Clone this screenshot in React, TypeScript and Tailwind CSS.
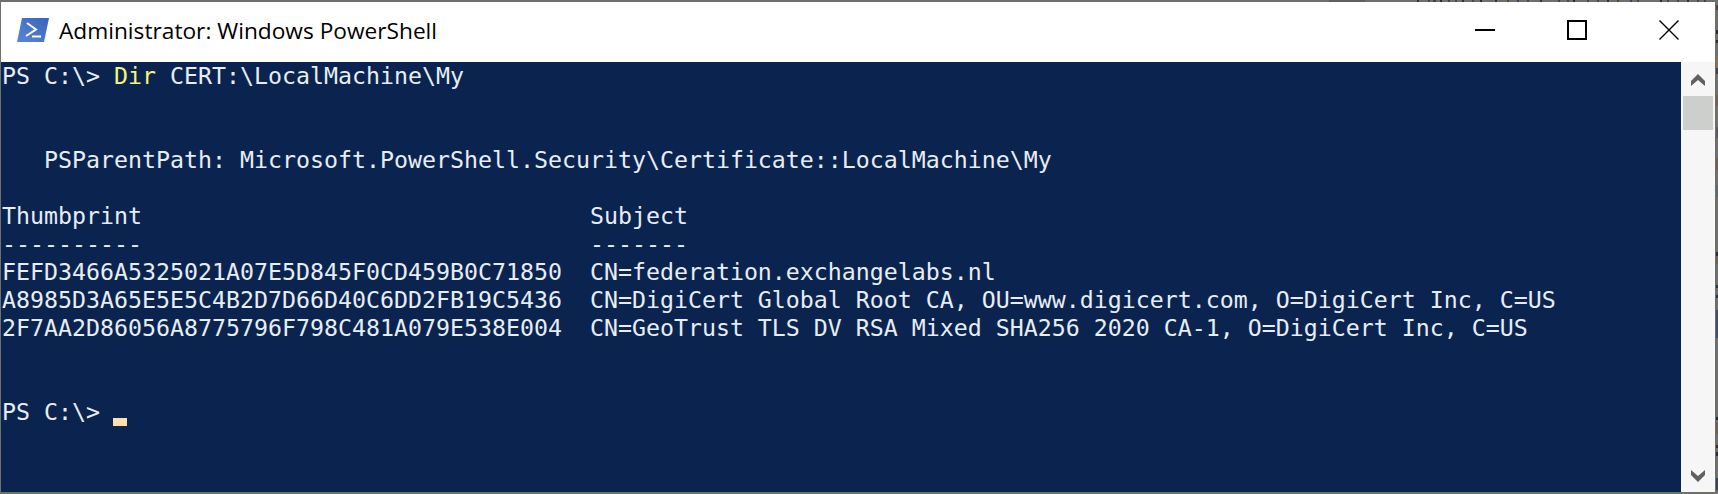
import React from 'react';

const consoleFont = '"DejaVu Sans Mono", monospace';

// bits of the desktop behind the window that show along its top and right edges
const topMarks = [
  [1329, 36, '#5f5f5c'], [1417, 2, '#2b3346'], [1428, 2, '#4f4a3e'], [1433, 3, '#3a4458'], [1440, 2, '#2e2a2e'],
  [1448, 2, '#3a4458'], [1455, 2, '#4f4a3e'], [1462, 2, '#2b3346'], [1472, 2, '#4f4a3e'], [1480, 2, '#2e2a2e'],
  [1495, 2, '#2b3346'], [1507, 2, '#4f4a3e'], [1517, 2, '#3a4458'], [1527, 2, '#4f4a3e'], [1540, 2, '#2b3346'],
  [1558, 2, '#3a4458'], [1567, 2, '#4f4a3e'], [1573, 2, '#2e2a2e'], [1587, 2, '#3a4458'], [1597, 2, '#4f4a3e'],
  [1607, 2, '#2b3346'], [1617, 2, '#4f4a3e'], [1630, 2, '#3a4458'], [1637, 2, '#4f4a3e'], [1660, 2, '#2e2a2e'],
  [1667, 2, '#3a4458'], [1677, 2, '#4f4a3e'], [1687, 2, '#2b3346'], [1697, 2, '#4f4a3e'], [1704, 2, '#3a4458'],
] as const;

const rightMarks = [
  [5, 5, '#4f4a3e'], [30, 4, '#2b2b30'], [40, 3, '#2b2b30'], [56, 16, '#8a7148'], [68, 6, '#3a4458'],
  [95, 11, '#6f6248'], [127, 11, '#5f5a6a'], [158, 12, '#6f6248'], [185, 12, '#5f6a6a'], [252, 4, '#2b2b30'],
  [256, 8, '#6f6248'], [285, 3, '#2b3346'], [295, 3, '#2b3346'], [310, 28, '#3a5068'], [417, 3, '#2b2b30'],
  [422, 12, '#6f6248'], [445, 3, '#2b2b30'], [452, 4, '#2b2b30'], [478, 12, '#3a4458'],
] as const;

const PowerShellIcon = () => (
  <svg width="32" height="24" viewBox="0 0 32 24" className="shrink-0">
    <defs>
      <linearGradient id="psBg" x1="0" y1="1" x2="1" y2="0">
        <stop offset="0" stopColor="#5a86d8" />
        <stop offset="1" stopColor="#3a63bb" />
      </linearGradient>
    </defs>
    <polygon points="5,0 32,0 27,24 0,24" fill="url(#psBg)" />
    <path d="M10 5 L19 11.5 L9 18" fill="none" stroke="#ffffff" strokeWidth="2" />
    <rect x="15" y="17.5" width="9" height="2" fill="#ffffff" />
  </svg>
);

const ScrollArrow = ({ down }: { down?: boolean }) => (
  <svg width="14" height="12" viewBox="0 0 14 12" className={down ? 'rotate-180' : ''}>
    <path d="M0 12 V7 L7 0 L14 7 V12 L7 6 Z" fill="#606060" />
  </svg>
);

export default function App() {
  return (
    <div className="relative h-[494px] w-[1718px] overflow-hidden bg-[#6f6f6b] pt-[2px] pr-[3px] pb-[2px] pl-px">
      {topMarks.map(([x, w, color]) => (
        <span key={x} className="absolute top-0 h-[2px]" style={{ left: x, width: w, backgroundColor: color }} />
      ))}
      {rightMarks.map(([y, h, color]) => (
        <span key={y} className="absolute right-0 w-[2px]" style={{ top: y, height: h, backgroundColor: color }} />
      ))}
      <div className="flex h-full flex-col">
        {/* title bar */}
        <div className="flex h-[60px] shrink-0 items-center bg-white pb-[4px]">
          <div className="ml-[16px] mr-[10px]">
            <PowerShellIcon />
          </div>
          <span className="mt-[2px] text-[22.7px] text-black" style={{ fontFamily: '"Open Sans", sans-serif' }}>
            Administrator: Windows PowerShell
          </span>
          <div className="ml-auto flex items-center">
            <div className="flex h-[56px] w-[92px] items-center justify-center">
              <div className="h-[2px] w-[20px] bg-black" />
            </div>
            <div className="flex h-[56px] w-[92px] items-center justify-center">
              <div className="h-[20px] w-[20px] border-2 border-black" />
            </div>
            <div className="flex h-[56px] w-[92px] items-center justify-center">
              <svg width="20" height="20" viewBox="0 0 20 20">
                <path d="M0.5 0.5 L19.5 19.5 M19.5 0.5 L0.5 19.5" stroke="#000000" strokeWidth="1.4" />
              </svg>
            </div>
          </div>
        </div>

        <div className="flex min-h-0 flex-1">
          {/* console */}
          <pre
            className="min-w-0 flex-1 overflow-hidden bg-[#0b244f] pl-px text-[23.25px] leading-[28px] text-[#e6edf5]"
            style={{ fontFamily: consoleFont }}
          >
            <div>PS C:\&gt; <span className="text-[#f5f57a]">Dir</span> CERT:\LocalMachine\My</div>
            <div>{' '}</div>
            <div>{' '}</div>
            <div>   PSParentPath: Microsoft.PowerShell.Security\Certificate::LocalMachine\My</div>
            <div>{' '}</div>
            <div>Thumbprint                                Subject</div>
            <div>----------                                -------</div>
            <div>FEFD3466A5325021A07E5D845F0CD459B0C71850  CN=federation.exchangelabs.nl</div>
            <div>A8985D3A65E5E5C4B2D7D66D40C6DD2FB19C5436  CN=DigiCert Global Root CA, OU=www.digicert.com, O=DigiCert Inc, C=US</div>
            <div>2F7AA2D86056A8775796F798C481A079E538E004  CN=GeoTrust TLS DV RSA Mixed SHA256 2020 CA-1, O=DigiCert Inc, C=US</div>
            <div>{' '}</div>
            <div>{' '}</div>
            <div className="relative">
              PS C:\&gt;{' '}
              <span className="absolute top-[20px] left-[111px] h-[8px] w-[14px] bg-[#fde0b0]" />
            </div>
          </pre>

          {/* scrollbar */}
          <div className="flex w-[34px] shrink-0 flex-col items-center bg-[#f6f6f6]">
            <div className="flex h-[34px] w-full items-center justify-center pt-[2px]">
              <ScrollArrow />
            </div>
            <div className="h-[34px] w-[30px] bg-[#cdcfcc]" />
            <div className="mt-auto flex h-[34px] w-full items-center justify-center pt-[2px]">
              <ScrollArrow down />
            </div>
          </div>
        </div>
      </div>
    </div>
  );
}
